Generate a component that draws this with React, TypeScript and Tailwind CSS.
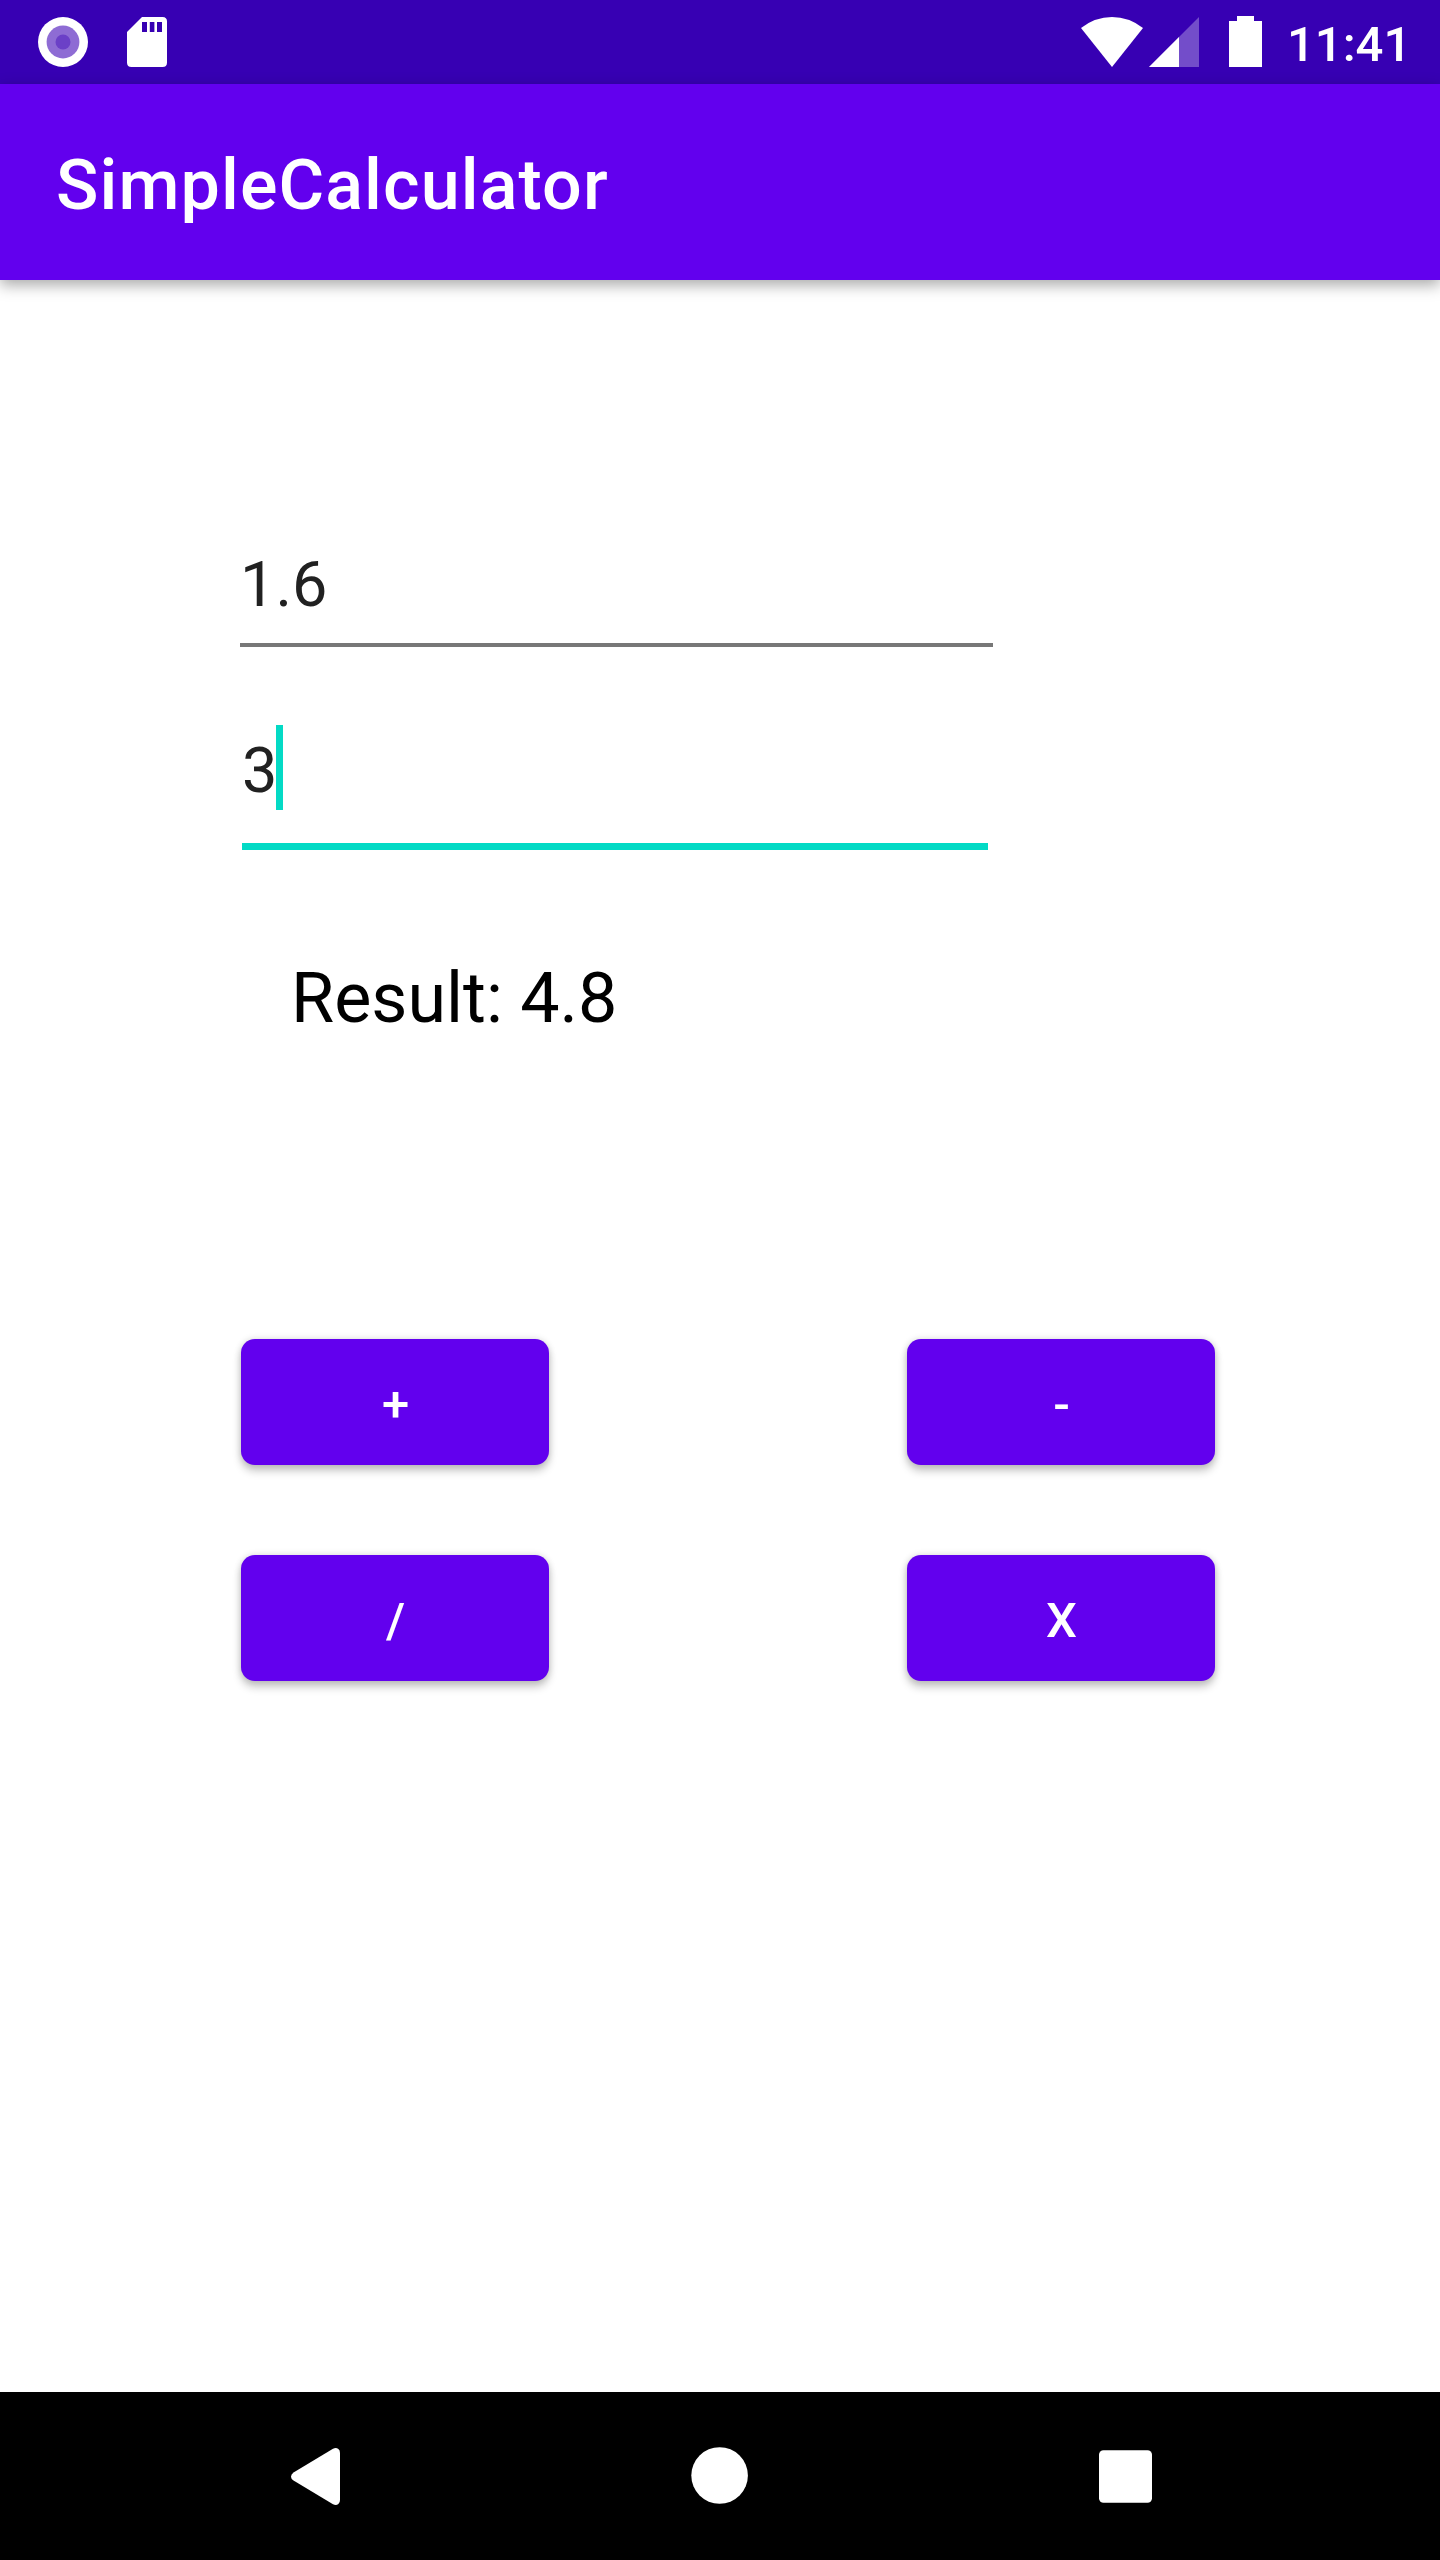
import React from "react";

const font = "font-['Roboto',sans-serif]";

function StatusBar() {
  return (
    <header className="flex h-[84px] shrink-0 justify-between bg-[#3700b3]">
      <svg width="200" height="84" viewBox="0 0 200 84" fill="#fff" aria-hidden="true">
        <circle cx="63" cy="42" r="25" />
        <circle cx="63" cy="42" r="16.4" fill="#8e6cd4" />
        <circle cx="63" cy="42" r="7.5" fill="#6b40c7" />
        <path d="M142 17H162.500Q167 17 167 21.500V62.500Q167 67 162.500 67H131.500Q127 67 127 62.500V32Z" />
        <path d="M142 22h5v10h-5zM149.800 22h4.600v10h-4.600zM157 22h5v10h-5z" fill="#3700b3" />
      </svg>
      <div className="flex">
        <svg width="220" height="84" viewBox="1060 0 220 84" fill="#fff" aria-hidden="true">
          <path d="M1081 28Q1095 17 1112 17T1143 28L1112 67Z" />
          <path d="M1149 67L1199 17V67Z" fillOpacity="0.3" />
          <path d="M1149 67L1179 37V67Z" />
          <path d="M1229 21H1237V16H1254V21H1262V67H1229Z" />
        </svg>
        <time className="w-[160px] pl-[7px] pt-4 text-[49px] font-medium leading-[58px] text-white">11:41</time>
      </div>
    </header>
  );
}

function CalcButton({ children }: { children: React.ReactNode }) {
  return (
    <button
      type="button"
      className="flex h-[126px] w-[308px] items-center justify-center rounded-[14px] bg-[#6200ee] pl-px pt-[6px] text-[49px] font-medium leading-[58px] text-white shadow-[0_6px_9px_rgba(0,0,0,0.22),0_0_7px_rgba(0,0,0,0.14)]"
    >
      {children}
    </button>
  );
}

function NavBar() {
  return (
    <nav className="h-[168px] shrink-0 bg-black">
      <svg width="1440" height="168" viewBox="0 2392 1440 168" fill="#fff" aria-hidden="true">
        <path d="M333 2448.800Q336 2447.300 338.400 2449Q340 2450.200 340 2453V2500Q340 2502.800 338.400 2504Q336 2505.700 333 2504.200L293.500 2480.500Q291 2479 291 2476.700T293.500 2472.500Z" />
        <circle cx="719.600" cy="2475.500" r="28.300" />
        <rect x="1099" y="2450.200" width="53" height="52.600" rx="4.500" />
      </svg>
    </nav>
  );
}

export default function App() {
  return (
    <div className={`flex h-[2560px] w-[1440px] flex-col overflow-hidden bg-white ${font}`}>
      <StatusBar />
      <div className="relative flex h-[196px] shrink-0 items-center bg-[#6200ee] px-14 pt-[6px] shadow-[0_5px_14px_rgba(0,0,0,0.34)]">
        <h1 className="text-[70px] font-medium leading-[82px] tracking-[1.1px] text-white">SimpleCalculator</h1>
      </div>
      <main className="flex flex-1 flex-col items-start">
        <div className="ml-[240px] mt-[266px] h-[101px] w-[753px] border-b-4 border-[#777777] pt-0.5 text-[63px] leading-[74px] text-[#212121]">
          1.6
        </div>
        <div className="ml-[242px] mt-[75px] flex h-[128px] w-[746px] items-start border-b-[7px] border-[#03dac5] pt-[3px]">
          <span className="w-[34px] pt-[9px] text-[63px] leading-[74px] text-[#212121]">3</span>
          <span className="h-[85px] w-[7px] bg-[#03dac5]" />
        </div>
        <p className="ml-[291px] mt-[107px] text-[70px] leading-[82px] text-black">Result: 4.8</p>
        <div className="ml-[241px] mt-[300px] grid grid-cols-[308px_308px] gap-x-[358px] gap-y-[90px]">
          <CalcButton>+</CalcButton>
          <CalcButton>-</CalcButton>
          <CalcButton>/</CalcButton>
          <CalcButton>X</CalcButton>
        </div>
      </main>
      <NavBar />
    </div>
  );
}
